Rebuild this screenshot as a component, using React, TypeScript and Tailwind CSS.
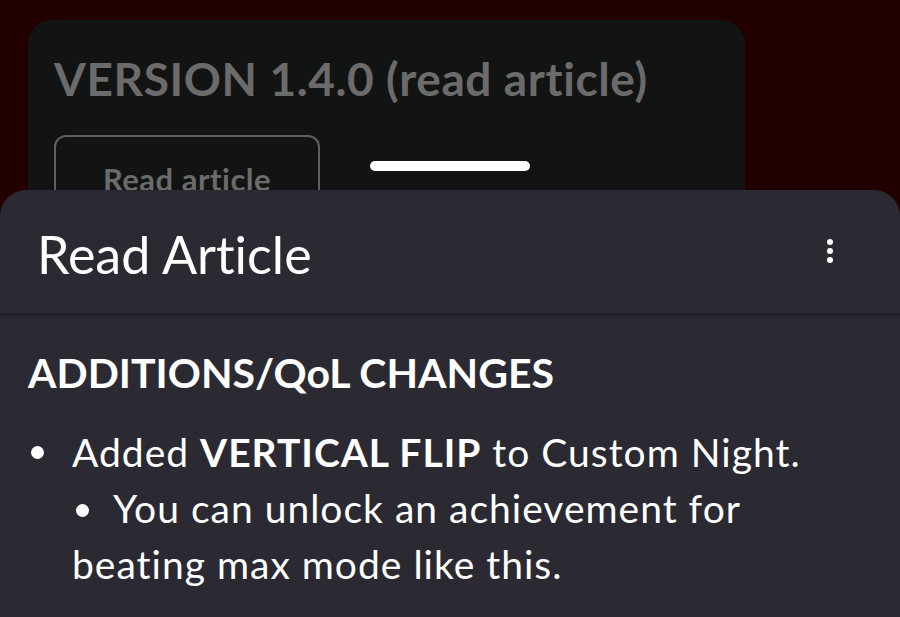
import React from "react";

export default function App() {
  return (
    <div
      className="relative w-[900px] h-[617px] overflow-hidden bg-[#220002] [font-variant-ligatures:none]"
      style={{ fontFamily: "Lato, 'Noto Sans', sans-serif" }}
    >
      {/* background card */}
      <div className="ml-[28px] mt-[20px] w-[717px] h-[260px] rounded-[24px] bg-[#121414] pl-[26px] pt-[29px]">
        <div className="text-[46px] leading-[60px] font-bold text-[#6b6b6b] tracking-[0.6px]">
          VERSION 1.4.0 (read article)
        </div>
        <div className="mt-[26px] flex items-start">
          <div className="w-[266px] h-[90px] rounded-[12px] border-2 border-[#5f5f5f] flex justify-center pt-[23px]">
            <span className="text-[31px] leading-[38px] font-bold text-[#6b6b6b] tracking-[0.5px]">Read article</span>
          </div>
          <div className="ml-[50px] mt-[26px] w-[160px] h-[10px] rounded-full bg-white" />
        </div>
      </div>

      {/* bottom sheet */}
      <div className="absolute left-0 right-0 top-[190px] bottom-0 rounded-t-[26px] bg-[#2b2a33] flex flex-col">
        <div className="h-[123px] flex items-center justify-between pl-[37px] pr-[67px] shrink-0">
          <span className="text-[52px] leading-[60px] text-white pt-[4px]">Read Article</span>
          <div className="flex flex-col items-center gap-[3px] pb-[2px]">
            <span className="w-[6px] h-[6px] rounded-full bg-white" />
            <span className="w-[6px] h-[6px] rounded-full bg-white" />
            <span className="w-[6px] h-[6px] rounded-full bg-white" />
          </div>
        </div>
        <div className="h-[6px] bg-gradient-to-b from-[#1f1f25] to-[#2b2a33] shrink-0" />
        <div className="pl-[28px] pr-[76px] pt-[30px] text-white">
          <div className="text-[41px] leading-[48px] font-bold">ADDITIONS/QoL CHANGES</div>
          <div className="mt-[27px] text-[39px] leading-[56px] tracking-[1px]">
            <div className="flex">
              <span className="w-[44px] flex items-center shrink-0">
                <span className="ml-[3px] w-[13px] h-[13px] rounded-full bg-white" />
              </span>
              <span>
                Added <b className="font-bold">VERTICAL FLIP</b> to Custom Night.
              </span>
            </div>
            <div className="pl-[44px]">
              <span className="inline-block align-middle w-[13px] h-[13px] rounded-full bg-white ml-[4px] mr-[24px] mb-[6px]" />
              You can unlock an achievement for beating max mode like this.
            </div>
          </div>
        </div>
      </div>
    </div>
  );
}
